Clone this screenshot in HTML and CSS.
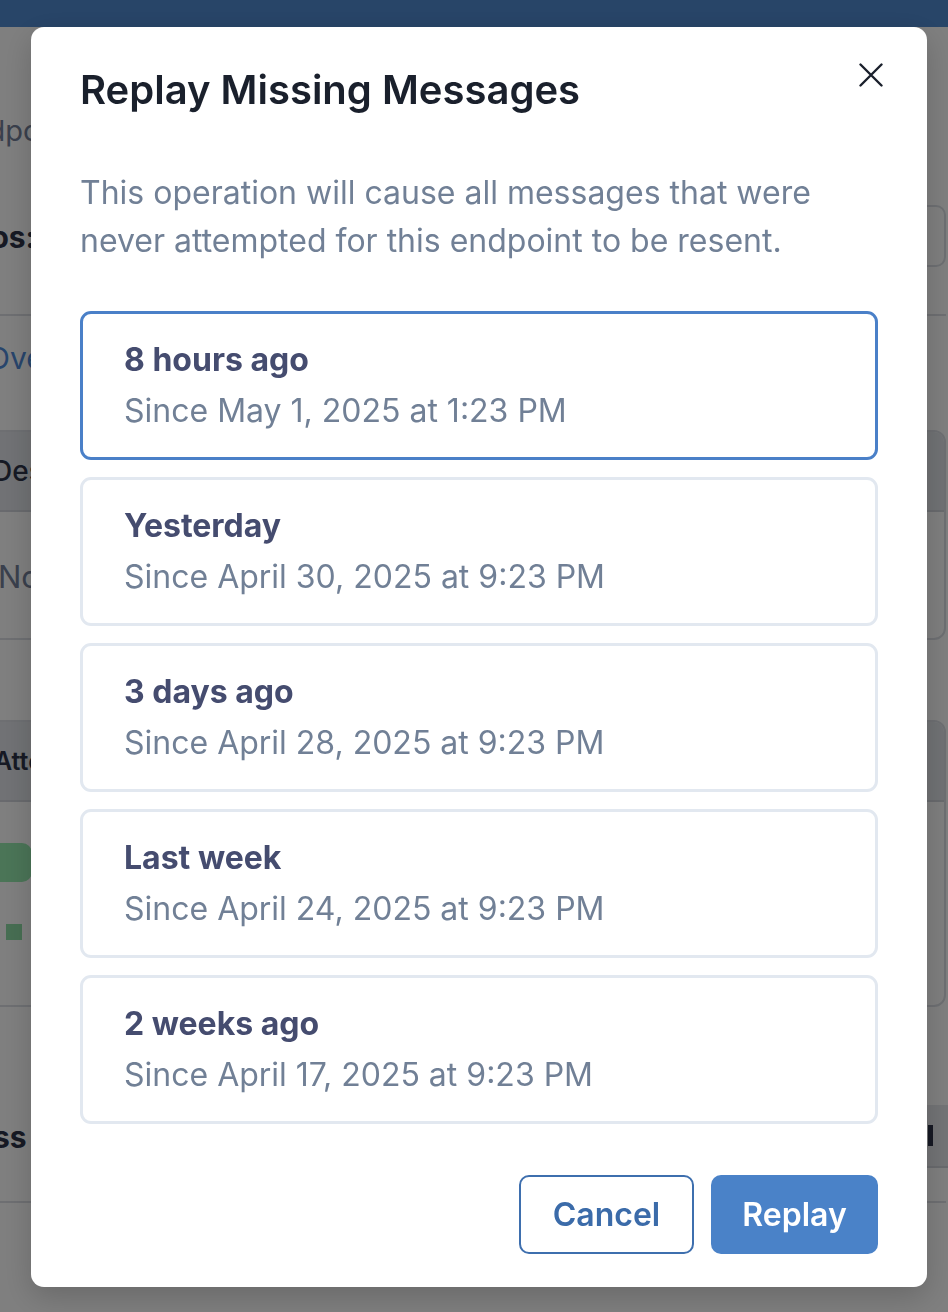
FILE: index.html
```html
<!DOCTYPE html>
<html lang="en">
<head>
<meta charset="utf-8">
<title>Replay Missing Messages</title>
<link rel="stylesheet" href="styles.css">
</head>
<body>
<div class="page">
  <div class="topbar"></div>
  <div class="bg-content">
    <div class="bg-row bg-row-url"><span class="bg-label">Endpoint URL</span></div>
    <div class="bg-row bg-row-status"><span class="bg-strong ind-os">Infos:</span><span class="bg-box"></span></div>
    <div class="bg-tabs"><span class="bg-tab">Overview</span></div>
    <div class="bg-card bg-card-desc">
      <div class="bg-card-head"><span class="bg-head-text ind-des">Description</span></div>
      <div class="bg-card-body"><span class="bg-muted">No description</span></div>
    </div>
    <div class="bg-card bg-card-att">
      <div class="bg-card-head"><span class="bg-head-text ind-att">Attempts</span></div>
      <div class="bg-card-body bg-att-body">
        <span class="bg-pill"></span>
        <span class="bg-square"></span>
      </div>
    </div>
    <div class="bg-row bg-row-address">
      <span class="bg-strong ind-ss">Address</span>
      <span class="bg-band"><span class="bg-mark"></span></span>
    </div>
    <div class="bg-rule"></div>
  </div>
</div>

<div class="overlay">
  <div class="modal" role="dialog" aria-labelledby="modal-title">
    <button class="close-btn" aria-label="Close">
      <svg width="24" height="24" viewBox="0 0 24 24" fill="none" stroke="#1a202c" stroke-width="2.4" stroke-linecap="round">
        <path d="M1.5 1.5 L22.5 22.5 M22.5 1.5 L1.5 22.5"/>
      </svg>
    </button>
    <h2 class="modal-title" id="modal-title">Replay Missing Messages</h2>
    <p class="modal-desc">This operation will cause all messages that were never attempted for this endpoint to be resent.</p>
    <div class="options">
      <div class="option selected">
        <div class="option-title">8 hours ago</div>
        <div class="option-sub">Since May 1, 2025 at 1:23 PM</div>
      </div>
      <div class="option">
        <div class="option-title">Yesterday</div>
        <div class="option-sub">Since April 30, 2025 at 9:23 PM</div>
      </div>
      <div class="option">
        <div class="option-title">3 days ago</div>
        <div class="option-sub">Since April 28, 2025 at 9:23 PM</div>
      </div>
      <div class="option">
        <div class="option-title">Last week</div>
        <div class="option-sub">Since April 24, 2025 at 9:23 PM</div>
      </div>
      <div class="option">
        <div class="option-title">2 weeks ago</div>
        <div class="option-sub">Since April 17, 2025 at 9:23 PM</div>
      </div>
    </div>
    <div class="footer">
      <button class="btn btn-outline">Cancel</button>
      <button class="btn btn-primary">Replay</button>
    </div>
  </div>
</div>
</body>
</html>
```

FILE: styles.css
```css
* { box-sizing: border-box; }

html, body {
  margin: 0;
  padding: 0;
}

body {
  font-family: Inter, "Noto Sans", "Liberation Sans", sans-serif;
  background: #ffffff;
  width: 948px;
  height: 1312px;
  overflow: hidden;
}

/* ---------- background page ---------- */
.page {
  width: 948px;
  height: 1312px;
  overflow: hidden;
}

.topbar {
  height: 27px;
  background: #508ad0;
}

.bg-content {
  padding-right: 2px;
}

.bg-row {
  display: flex;
  align-items: center;
  white-space: nowrap;
}

.bg-row-url {
  height: 130px;
  padding-top: 86px;
  align-items: flex-start;
}

.bg-label {
  font-size: 29px;
  color: #74809a;
  margin-left: -47px;
}

.bg-row-status {
  height: 159px;
  align-items: flex-start;
  padding-top: 62px;
  justify-content: space-between;
  border-bottom: 2px solid #dcdee4;
}

.bg-strong {
  font-size: 30px;
  font-weight: 700;
  color: #2d3348;
}

.ind-os { margin-left: -48px; }

.bg-box {
  width: 120px;
  height: 62px;
  margin-top: -14px;
  border: 2px solid #dcdfe5;
  border-radius: 10px;
}

.bg-tabs {
  height: 114px;
  padding-top: 24px;
  white-space: nowrap;
}

.bg-tab {
  font-size: 30px;
  color: #4f8ad8;
  margin-left: -13px;
}

.bg-card {
  border: 2px solid #dcdfe5;
  border-radius: 12px;
  margin-left: -40px;
  overflow: hidden;
  white-space: nowrap;
}

.bg-card-head {
  height: 80px;
  background: #e2e5ea;
  border-bottom: 2px solid #d2d5dc;
  display: flex;
  align-items: center;
}

.bg-head-text {
  font-size: 28px;
  font-weight: 500;
  color: #2d3348;
}

.ind-des { margin-left: 30px; }
.ind-att { margin-left: 32px; font-size: 25px; font-weight: 600; }

.bg-card-desc {
  height: 210px;
}

.bg-card-desc .bg-card-body {
  height: 128px;
  display: flex;
  align-items: center;
  padding-left: 36px;
}

.bg-muted {
  font-size: 31px;
  color: #74809a;
}

.bg-card-att {
  height: 287px;
  margin-top: 80px;
}

.bg-att-body {
  display: flex;
  flex-direction: column;
  padding-top: 41px;
}

.bg-pill {
  display: block;
  width: 70px;
  height: 39px;
  background: #96eaaf;
  border-radius: 10px;
}

.bg-square {
  display: block;
  width: 16px;
  height: 16px;
  background: #8fdda6;
  margin-top: 42px;
  margin-left: 44px;
}

.bg-row-address {
  height: 63px;
  margin-top: 98px;
  align-items: center;
  margin-right: -2px;
}

.ind-ss { margin-left: -96px; }

.bg-band {
  flex: 1;
  align-self: stretch;
  margin-left: 40px;
  background: #e6e8ec;
  border-bottom: 2px solid #d2d5dc;
  display: flex;
  align-items: center;
  justify-content: flex-end;
}

.bg-mark {
  width: 5px;
  height: 21px;
  background: #2d3348;
  margin-right: 15px;
}

.bg-rule {
  height: 2px;
  margin-top: 33px;
  background: #dcdee4;
}

/* ---------- overlay & modal ---------- */
.overlay {
  position: fixed;
  inset: 0;
  background: rgba(0, 0, 0, 0.5);
  display: flex;
  padding: 27px 21px 25px 31px;
}

.modal {
  position: relative;
  flex: 1;
  background: #ffffff;
  border-radius: 13px;
  padding: 39px 49px 33px;
  display: flex;
  flex-direction: column;
  box-shadow: 0 10px 30px rgba(0, 0, 0, 0.18);
}

.close-btn {
  position: absolute;
  top: 36px;
  right: 44px;
  width: 24px;
  height: 24px;
  padding: 0;
  border: 0;
  background: none;
  display: flex;
  cursor: pointer;
}

.modal-title {
  margin: 0;
  font-size: 40px;
  line-height: 48px;
  font-weight: 600;
  color: #1a202c;
  letter-spacing: 0;
}

.modal-desc {
  margin: 55px 0 0;
  font-size: 32px;
  line-height: 48px;
  color: #718096;
}

.options {
  margin-top: 46px;
  display: flex;
  flex-direction: column;
  gap: 17px;
}

.option {
  height: 149px;
  border: 3px solid #e2e8f0;
  border-radius: 11px;
  padding: 20px 41px 0;
  cursor: pointer;
}

.option.selected {
  border-color: #4a80c8;
}

.option-title {
  font-size: 32px;
  line-height: 51px;
  font-weight: 700;
  color: #454c6f;
}

.option-sub {
  font-size: 32px;
  line-height: 51px;
  color: #718096;
}

.footer {
  margin-top: auto;
  display: flex;
  justify-content: flex-end;
  gap: 17px;
}

.btn {
  height: 79px;
  border-radius: 10px;
  font-family: inherit;
  font-size: 32px;
  font-weight: 600;
  cursor: pointer;
  padding: 0;
}

.btn-outline {
  width: 175px;
  background: #ffffff;
  border: 2px solid #3e6fae;
  color: #3b6ba9;
}

.btn-primary {
  width: 167px;
  background: #4a82c8;
  border: 0;
  color: #ffffff;
}
```
